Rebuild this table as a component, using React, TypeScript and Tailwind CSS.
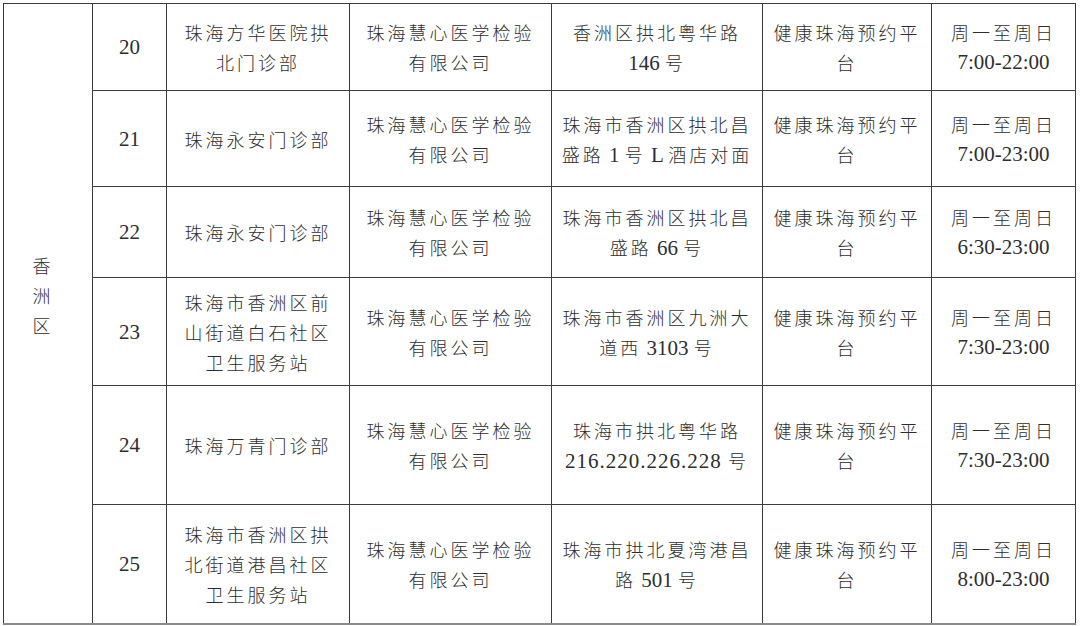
const rows: { no: string; name: string[]; company: string[]; addr: string[]; hours: string; h: string }[] = [
  { no: "20", name: ["珠海方华医院拱", "北门诊部"], company: ["珠海慧心医学检验", "有限公司"], addr: ["香洲区拱北粤华路", "146 号"], hours: "7:00-22:00", h: "h-[87px]" },
  { no: "21", name: ["珠海永安门诊部"], company: ["珠海慧心医学检验", "有限公司"], addr: ["珠海市香洲区拱北昌", "盛路 1 号 L 酒店对面"], hours: "7:00-23:00", h: "h-[96px]" },
  { no: "22", name: ["珠海永安门诊部"], company: ["珠海慧心医学检验", "有限公司"], addr: ["珠海市香洲区拱北昌", "盛路 66 号"], hours: "6:30-23:00", h: "h-[91px]" },
  { no: "23", name: ["珠海市香洲区前", "山街道白石社区", "卫生服务站"], company: ["珠海慧心医学检验", "有限公司"], addr: ["珠海市香洲区九洲大", "道西 3103 号"], hours: "7:30-23:00", h: "h-[108px]" },
  { no: "24", name: ["珠海万青门诊部"], company: ["珠海慧心医学检验", "有限公司"], addr: ["珠海市拱北粤华路", "216.220.226.228 号"], hours: "7:30-23:00", h: "h-[119px]" },
  { no: "25", name: ["珠海市香洲区拱", "北街道港昌社区", "卫生服务站"], company: ["珠海慧心医学检验", "有限公司"], addr: ["珠海市拱北夏湾港昌", "路 501 号"], hours: "8:00-23:00", h: "h-[119px]" },
]

// CJK runs get a smaller size plus tracking, latin runs use the serif face
function Line({ text }: { text: string }) {
  const parts = text.split(/([\x00-\x7F]+)/).filter(Boolean)
  return (
    <div className="whitespace-nowrap h-[30px] leading-[30px]">
      {parts.map((p, i) =>
        /^[\x00-\x7F]+$/.test(p) ? (
          <span key={i} className={`text-[21px] font-['Liberation_Serif',serif] ${p.includes(".") ? "tracking-[1px]" : ""}`}>
            {p}
          </span>
        ) : (
          <span key={i} className="text-[18px] tracking-[3px] font-light font-['Noto_Sans_CJK_SC',sans-serif]">
            {p}
          </span>
        )
      )}
    </div>
  )
}

function Cell({ lines, last }: { lines: string[]; last?: boolean }) {
  return (
    <td className={`border border-[#3c3c3c] text-center align-middle p-0 ${last ? "border-b-2 border-b-[#8a8a8a]" : ""}`}>
      {lines.map((l, i) => (
        <Line key={i} text={l} />
      ))}
    </td>
  )
}

export default function App() {
  return (
    <div className="w-[1080px] h-[626px] bg-white overflow-hidden pt-[3px] pl-[3px] text-[#2e2e2e]">
      <table className="table-fixed border-collapse w-[1072px]">
        <colgroup>
          <col className="w-[89px]" />
          <col className="w-[74px]" />
          <col className="w-[183px]" />
          <col className="w-[202px]" />
          <col className="w-[211px]" />
          <col className="w-[169px]" />
          <col className="w-[144px]" />
        </colgroup>
        <tbody>
          {rows.map((r, i) => {
            const last = i === rows.length - 1
            return (
              <tr key={r.no} className={r.h}>
                {i === 0 && (
                  <td rowSpan={rows.length} className="border border-[#3c3c3c] border-b-2 border-b-[#8a8a8a] text-center align-middle p-0">
                    <div className="pb-[36px] pr-[10px]">
                      <Line text="香" />
                      <Line text="洲" />
                      <Line text="区" />
                    </div>
                  </td>
                )}
                <Cell lines={[r.no]} last={last} />
                <Cell lines={r.name} last={last} />
                <Cell lines={r.company} last={last} />
                <Cell lines={r.addr} last={last} />
                <Cell lines={["健康珠海预约平", "台"]} last={last} />
                <Cell lines={["周一至周日", r.hours]} last={last} />
              </tr>
            )
          })}
        </tbody>
      </table>
    </div>
  )
}
